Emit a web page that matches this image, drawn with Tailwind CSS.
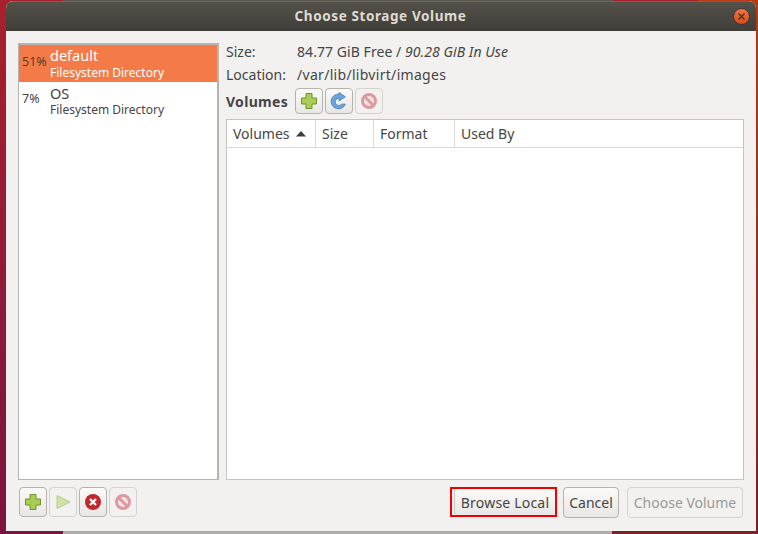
<!doctype html>
<html>
  <head>
    <meta charset="utf-8" />
    <script src="https://cdn.jsdelivr.net/npm/@tailwindcss/browser@4"></script>
  </head>
  <body class="relative w-[758px] h-[534px] overflow-hidden bg-gradient-to-b from-[#a8202c] to-[#7a1440] font-['Noto_Sans',sans-serif] text-[14px] text-[#454545]">
    <!-- desktop behind the dialog -->
    <div class="absolute inset-y-0 right-0 w-[60px] bg-gradient-to-b from-[#b93a10] to-[#7c1f24]"></div>
    <div class="absolute top-0 left-[63px] w-[550px] h-[2px] bg-[#5a574f]"></div>
    <div class="absolute bottom-0 left-[63px] w-[549px] h-[3px] bg-[#b0aeab]"></div>
    <div class="absolute bottom-0 left-[612px] w-[146px] h-[3px] bg-[#7c2228]"></div>

    <div class="absolute left-[6px] top-[1px] w-[750px] h-[530px] flex flex-col bg-[#f2f1f0] rounded-t-[7px] overflow-hidden">
      <header class="h-[30px] shrink-0 relative flex items-center justify-center bg-gradient-to-b from-[#54514a] to-[#403e39] border-t border-[#6a675f]">
        <h1 class="-ml-[1px] text-[13.5px] font-bold text-[#dfdbd2] tracking-[0.6px]">Choose Storage Volume</h1>
        <button class="absolute right-[6px] top-[6px] w-[17px] h-[17px] rounded-full bg-gradient-to-b from-[#f2763e] to-[#d9481c] border border-[#3a3733] flex items-center justify-center">
          <svg width="9" height="9" viewBox="0 0 9 9"><path d="M1.5 1.5l6 6M7.5 1.5l-6 6" stroke="#4a3020" stroke-width="1.4" /></svg>
        </button>
      </header>

      <div class="flex-1 flex gap-[7px] pt-[12px] pl-[12px] pr-[12px] min-h-0">
        <!-- storage pools -->
        <aside class="w-[201px] h-[437px] shrink-0 bg-white border border-[#b6b4b0] border-r-[2px] border-t-[2px]">
          <div class="flex h-[37px] bg-[#f47b47] text-white">
            <span class="w-[31px] pl-[3px] pt-[8px] text-[12.5px] text-[#5a3b2c]">51%</span>
            <div class="flex flex-col">
              <span class="text-[14.5px] leading-[18px] mt-[1px]">default</span>
              <span class="text-[12px] leading-[16px] mt-[1px]">Filesystem Directory</span>
            </div>
          </div>
          <div class="flex h-[38px]">
            <span class="w-[31px] pl-[3px] pt-[8px] text-[12.5px]">7%</span>
            <div class="flex flex-col">
              <span class="text-[14.5px] leading-[16px] mt-[3px]">OS</span>
              <span class="text-[12px] leading-[16px] mt-[1px]">Filesystem Directory</span>
            </div>
          </div>
        </aside>

        <!-- volumes -->
        <section class="w-[518px] flex flex-col">
          <div class="flex h-[20px] items-center -mt-[2px]">
            <span class="w-[71px]">Size:</span>
            <span class="tracking-[0.06px]">84.77 GiB Free / <em>90.28 GiB In Use</em></span>
          </div>
          <div class="flex h-[20px] items-center mt-[3px]">
            <span class="w-[71px]">Location:</span>
            <span class="tracking-[0.3px]">/var/lib/libvirt/images</span>
          </div>
          <div class="flex items-center h-[28px] mt-[3px] gap-[2px]">
            <span class="font-bold mr-[5px] tracking-[0.3px]">Volumes</span>
            <button class="w-[28px] h-[26px] flex items-center justify-center rounded-[4px] border border-[#b5b3ae] bg-gradient-to-b from-[#fbfaf9] to-[#e9e7e5]">
              <svg width="18" height="18" viewBox="0 0 18 18"><path d="M6 1.500h6v4.500h4.500v6h-4.500v4.500h-6v-4.500h-4.500v-6h4.500z" fill="#a9cc54" stroke="#6f962a" /></svg>
            </button>
            <button class="w-[28px] h-[26px] flex items-center justify-center rounded-[4px] border border-[#b5b3ae] bg-gradient-to-b from-[#fbfaf9] to-[#e9e7e5]">
              <svg width="19" height="19" viewBox="0 0 18 18"><path d="M15.500 11.500A7 7 0 1 1 9.500 2V0.500l6 4-6 4V6a3.400 3.400 0 1 0 2.500 5.500z" fill="#6aa4dc" stroke="#3f78b5" stroke-width="0.7" /></svg>
            </button>
            <button class="w-[28px] h-[26px] flex items-center justify-center rounded-[4px] border border-[#d5d3cf]">
              <svg width="18" height="18" viewBox="0 0 18 18"><circle cx="9" cy="9" r="6.500" fill="#f2e4e4" stroke="#dc9aa0" stroke-width="3" /><path d="M4.800 4.800l8.400 8.400" stroke="#dc9aa0" stroke-width="3" /></svg>
            </button>
          </div>

          <div class="mt-[4px] h-[361px] bg-white border border-[#c6c4c0]">
            <div class="flex h-[28px] border-b border-[#dcdad6] text-[14px]">
              <div class="w-[89px] pl-[6px] flex items-center border-r border-[#dcdad6]">Volumes
                <svg class="ml-[6px]" width="10" height="6" viewBox="0 0 10 6"><path d="M5 0l5 5.500H0z" fill="#3d3d3d" /></svg>
              </div>
              <div class="w-[58px] pl-[6px] flex items-center border-r border-[#dcdad6]">Size</div>
              <div class="w-[81px] pl-[6px] flex items-center border-r border-[#dcdad6]">Format</div>
              <div class="flex-1 pl-[6px] flex items-center">Used By</div>
            </div>
          </div>
        </section>
      </div>

      <!-- bottom button row -->
      <footer class="h-[32px] mb-[13px] shrink-0 flex items-center pl-[13px] pr-[13px] gap-[2px]">
        <button class="w-[28px] h-[30px] flex items-center justify-center rounded-[4px] border border-[#b5b3ae] bg-gradient-to-b from-[#fbfaf9] to-[#e9e7e5]">
          <svg width="18" height="18" viewBox="0 0 18 18"><path d="M6 1.500h6v4.500h4.500v6h-4.500v4.500h-6v-4.500h-4.500v-6h4.500z" fill="#a9cc54" stroke="#6f962a" /></svg>
        </button>
        <button class="w-[28px] h-[30px] flex items-center justify-center rounded-[4px] border border-[#d5d3cf]">
          <svg width="16" height="16" viewBox="0 0 16 16"><path d="M2 1.500l13 6.500-13 6.500z" fill="#d0e0a8" stroke="#b5cc8a" /></svg>
        </button>
        <button class="w-[28px] h-[30px] flex items-center justify-center rounded-[4px] border border-[#b5b3ae] bg-gradient-to-b from-[#fbfaf9] to-[#e9e7e5]">
          <svg width="18" height="18" viewBox="0 0 18 18"><circle cx="9" cy="9" r="8" fill="#c1272d" /><path d="M6 6l6 6M12 6l-6 6" stroke="#fff" stroke-width="2.400" /></svg>
        </button>
        <button class="w-[28px] h-[30px] flex items-center justify-center rounded-[4px] border border-[#d5d3cf]">
          <svg width="18" height="18" viewBox="0 0 18 18"><circle cx="9" cy="9" r="6.500" fill="#f2e4e4" stroke="#dc9aa0" stroke-width="3" /><path d="M4.800 4.800l8.400 8.400" stroke="#dc9aa0" stroke-width="3" /></svg>
        </button>
        <div class="ml-auto flex items-center gap-[6px]">
          <div class="w-[107px] h-[30px] border-2 border-[#f00000] pl-[2px]">
            <button class="w-full h-full rounded-[3px] border-l border-[#c8c6c2] bg-gradient-to-b from-[#fbfaf9] to-[#e9e7e5] tracking-[0.2px]">Browse Local</button>
          </div>
          <button class="w-[56px] h-[31px] rounded-[4px] border border-[#b5b3ae] bg-gradient-to-b from-[#fbfaf9] to-[#e9e7e5]">Cancel</button>
          <button class="w-[116px] h-[31px] rounded-[4px] border border-[#d5d3cf] text-[#9a9996] ml-[2px]">Choose Volume</button>
        </div>
      </footer>
    </div>
  </body>
</html>
